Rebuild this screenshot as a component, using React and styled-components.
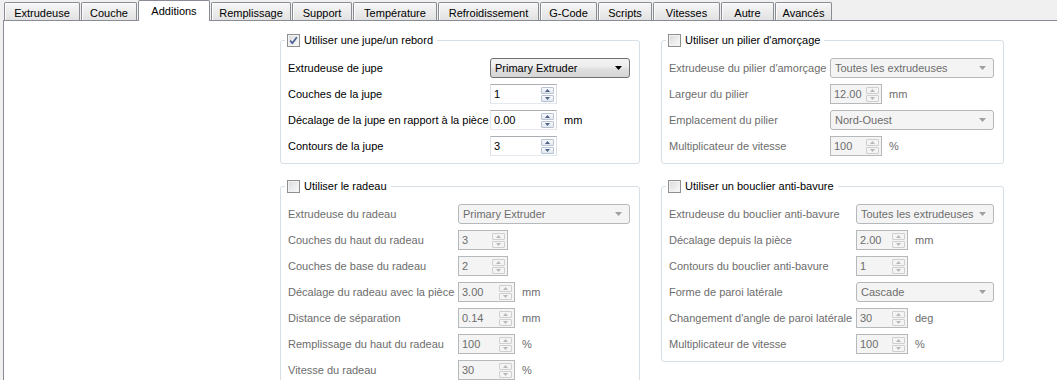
import React from "react";
import styled, { createGlobalStyle } from "styled-components";

const GlobalStyle = createGlobalStyle`
  html, body {
    margin: 0;
    padding: 0;
  }
  body {
    background: #f0f0f0;
    font-family: "Liberation Sans", Arial, sans-serif;
    font-size: 11px;
    color: #000;
    overflow: hidden;
  }
`;

const Window = styled.div`
  width: 1057px;
  height: 380px;
  display: flex;
  flex-direction: column;
`;

const TabBar = styled.div`
  display: flex;
  align-items: flex-end;
  height: 22px;
  padding-left: 4px;
`;

const Tab = styled.div`
  box-sizing: border-box;
  width: ${(p) => p.$w - 1}px;
  margin-right: 1px;
  height: ${(p) => (p.$active ? 21 : 18)}px;
  margin-bottom: ${(p) => (p.$active ? -1 : 0)}px;
  position: relative;
  z-index: ${(p) => (p.$active ? 1 : 0)};
  border: 1px solid #898c95;
  border-bottom: none;
  border-radius: 2px 2px 0 0;
  background: ${(p) =>
    p.$active ? "#fff" : "linear-gradient(#f6f6f6, #ececec 50%, #e2e2e2)"};
  box-shadow: ${(p) => (p.$active ? "none" : "inset 1px 1px 0 #fcfcfc")};
  display: flex;
  align-items: center;
  justify-content: center;
  padding-top: ${(p) => (p.$active ? 0 : 3)}px;
  white-space: nowrap;
`;

const Pane = styled.div`
  flex: 1;
  margin-left: 3px;
  background: #fff;
  border-top: 1px solid #898c95;
  border-left: 1px solid #898c95;
`;

const Columns = styled.div`
  display: flex;
  align-items: flex-start;
  gap: 21px;
  padding: 11px 0 0 276px;
`;

const Column = styled.div`
  width: ${(p) => p.$w}px;
  display: flex;
  flex-direction: column;
  gap: 14px;
`;

const Group = styled.fieldset`
  margin: 0;
  min-width: 0;
  padding: 10px 9px 7px 7px;
  border: 1px solid #d5dfe5;
  border-radius: 3px;
`;

const Legend = styled.legend`
  display: flex;
  align-items: center;
  gap: 4px;
  height: 16px;
  padding: 0 4px 0 2px;
  margin-left: -3px;
  white-space: nowrap;
`;

const Check = styled.span`
  box-sizing: border-box;
  width: 13px;
  height: 13px;
  border: 1px solid #8f8f8f;
  background: linear-gradient(135deg, #d9dadc, #fbfbfb);
  box-shadow: inset 0 0 0 1px #f3f3f3;
  display: flex;
  align-items: center;
  justify-content: center;
`;

const Form = styled.div`
  display: grid;
  grid-template-columns: ${(p) => p.$labelWidth}px auto 1fr;
  grid-auto-rows: 20px;
  row-gap: 6px;
  align-items: center;
`;

const Label = styled.div`
  grid-column: 1;
  white-space: nowrap;
  color: ${(p) => (p.$disabled ? "#6d6d6d" : "#000")};
`;

const Unit = styled.div`
  grid-column: 3;
  padding-left: 7px;
  color: ${(p) => (p.$disabled ? "#6d6d6d" : "#000")};
`;

const Combo = styled.div`
  grid-column: 2 / 4;
  box-sizing: border-box;
  height: 20px;
  display: flex;
  align-items: center;
  justify-content: space-between;
  padding: 0 7px 0 4px;
  border: 1px solid ${(p) => (p.$disabled ? "#b5b9bc" : "#707070")};
  border-radius: 3px;
  background: ${(p) =>
    p.$disabled
      ? "#f4f4f4"
      : "linear-gradient(#f3f3f3, #ececec 45%, #dfdfdf 55%, #d6d6d6)"};
  color: ${(p) => (p.$disabled ? "#6d6d6d" : "#000")};
`;

const Spin = styled.div`
  grid-column: 2;
  box-sizing: border-box;
  width: ${(p) => p.$w}px;
  height: 20px;
  display: flex;
  align-items: center;
  padding: 0 2px 0 3px;
  border: 1px solid;
  border-color: ${(p) =>
    p.$disabled ? "#b5b9bc" : "#abadb3 #dbdfe6 #e3e9ef #e2e3ea"};
  background: ${(p) => (p.$disabled ? "#f4f4f4" : "#fff")};
  color: ${(p) => (p.$disabled ? "#6d6d6d" : "#000")};
`;

const SpinValue = styled.span`
  flex: 1;
`;

const SpinButtons = styled.div`
  display: flex;
  flex-direction: column;
  gap: 1px;
`;

const SpinButton = styled.div`
  box-sizing: border-box;
  width: 13px;
  height: 7px;
  border: 1px solid ${(p) => (p.$disabled ? "#cfcfcf" : "#b9c4d2")};
  border-radius: 1px;
  background: ${(p) =>
    p.$disabled ? "#f4f4f4" : "linear-gradient(#f7f9fc, #e2e8f0)"};
  display: flex;
  align-items: center;
  justify-content: center;
`;

const tabs = [
  ["Extrudeuse", 77],
  ["Couche", 57],
  ["Additions", 73],
  ["Remplissage", 81],
  ["Support", 61],
  ["Température", 85],
  ["Refroidissement", 102],
  ["G-Code", 58],
  ["Scripts", 55],
  ["Vitesses", 68],
  ["Autre", 54],
  ["Avancés", 58],
];

const leftGroups = [
  {
    title: "Utiliser une jupe/un rebord",
    checked: true,
    labelWidth: 202,
    rows: [
      { label: "Extrudeuse de jupe", combo: "Primary Extruder" },
      { label: "Couches de la jupe", spin: "1", w: 67 },
      { label: "Décalage de la jupe en rapport à la pièce", spin: "0.00", w: 67, unit: "mm" },
      { label: "Contours de la jupe", spin: "3", w: 67 },
    ],
  },
  {
    title: "Utiliser le radeau",
    checked: false,
    labelWidth: 170,
    rows: [
      { label: "Extrudeuse du radeau", combo: "Primary Extruder" },
      { label: "Couches du haut du radeau", spin: "3", w: 50 },
      { label: "Couches de base du radeau", spin: "2", w: 50 },
      { label: "Décalage du radeau avec la pièce", spin: "3.00", w: 57, unit: "mm" },
      { label: "Distance de séparation", spin: "0.14", w: 57, unit: "mm" },
      { label: "Remplissage du haut du radeau", spin: "100", w: 57, unit: "%" },
      { label: "Vitesse du radeau", spin: "30", w: 57, unit: "%" },
    ],
  },
];

const rightGroups = [
  {
    title: "Utiliser un pilier d'amorçage",
    checked: false,
    labelWidth: 161,
    rows: [
      { label: "Extrudeuse du pilier d'amorçage", combo: "Toutes les extrudeuses" },
      { label: "Largeur du pilier", spin: "12.00", w: 52, unit: "mm" },
      { label: "Emplacement du pilier", combo: "Nord-Ouest" },
      { label: "Multiplicateur de vitesse", spin: "100", w: 52, unit: "%" },
    ],
  },
  {
    title: "Utiliser un bouclier anti-bavure",
    checked: false,
    labelWidth: 187,
    rows: [
      { label: "Extrudeuse du bouclier anti-bavure", combo: "Toutes les extrudeuses" },
      { label: "Décalage depuis la pièce", spin: "2.00", w: 52, unit: "mm" },
      { label: "Contours du bouclier anti-bavure", spin: "1", w: 52 },
      { label: "Forme de paroi latérale", combo: "Cascade" },
      { label: "Changement d'angle de paroi latérale", spin: "30", w: 52, unit: "deg" },
      { label: "Multiplicateur de vitesse", spin: "100", w: 52, unit: "%" },
    ],
  },
];

function Arrow({ dir, color, w = 5, h = 3 }) {
  const d = dir === "up" ? `M0 ${h}L${w / 2} 0L${w} ${h}Z` : `M0 0L${w} 0L${w / 2} ${h}Z`;
  return (
    <svg width={w} height={h} viewBox={`0 0 ${w} ${h}`}>
      <path d={d} fill={color} />
    </svg>
  );
}

function CheckBox({ checked }) {
  return (
    <Check>
      {checked && (
        <svg width="9" height="9" viewBox="0 0 9 9">
          <path d="M1.2 4.6L3.4 7.2L7.8 1.2" fill="none" stroke="#4a5f97" strokeWidth="1.7" />
        </svg>
      )}
    </Check>
  );
}

function SpinBox({ value, w, disabled }) {
  const c = disabled ? "#b8b8b8" : "#4d6185";
  return (
    <Spin $w={w} $disabled={disabled}>
      <SpinValue>{value}</SpinValue>
      <SpinButtons>
        <SpinButton $disabled={disabled}>
          <Arrow dir="up" color={c} />
        </SpinButton>
        <SpinButton $disabled={disabled}>
          <Arrow dir="down" color={c} />
        </SpinButton>
      </SpinButtons>
    </Spin>
  );
}

function SettingsGroup({ group }) {
  const disabled = !group.checked;
  return (
    <Group>
      <Legend>
        <CheckBox checked={group.checked} />
        <span>{group.title}</span>
      </Legend>
      <Form $labelWidth={group.labelWidth}>
        {group.rows.map((row) => (
          <React.Fragment key={row.label}>
            <Label $disabled={disabled}>{row.label}</Label>
            {row.combo ? (
              <Combo $disabled={disabled}>
                <span>{row.combo}</span>
                <Arrow dir="down" w={7} h={4} color={disabled ? "#a0a0a0" : "#000"} />
              </Combo>
            ) : (
              <>
                <SpinBox value={row.spin} w={row.w} disabled={disabled} />
                <Unit $disabled={disabled}>{row.unit}</Unit>
              </>
            )}
          </React.Fragment>
        ))}
      </Form>
    </Group>
  );
}

export default function App() {
  return (
    <Window>
      <GlobalStyle />
      <TabBar>
        {tabs.map(([name, w]) => (
          <Tab key={name} $w={w} $active={name === "Additions"}>
            {name}
          </Tab>
        ))}
      </TabBar>
      <Pane>
        <Columns>
          <Column $w={360}>
            {leftGroups.map((g) => (
              <SettingsGroup key={g.title} group={g} />
            ))}
          </Column>
          <Column $w={343}>
            {rightGroups.map((g) => (
              <SettingsGroup key={g.title} group={g} />
            ))}
          </Column>
        </Columns>
      </Pane>
    </Window>
  );
}
